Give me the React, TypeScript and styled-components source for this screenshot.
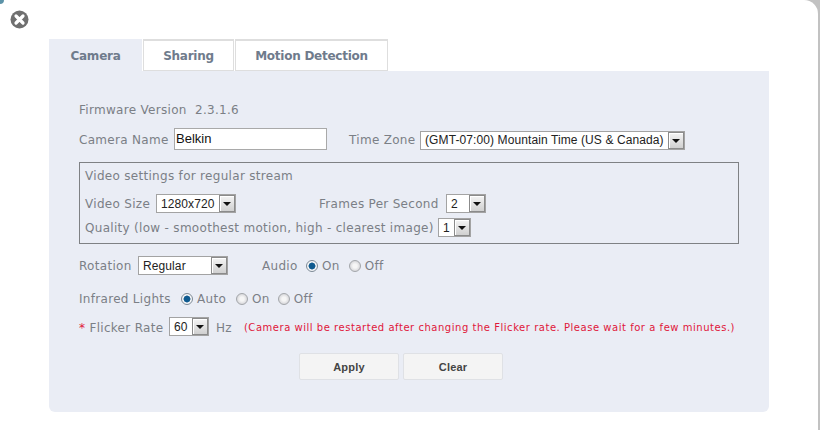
import React from "react";
import styled, { createGlobalStyle } from "styled-components";

const Global = createGlobalStyle`
  html, body { margin: 0; padding: 0; width: 820px; height: 436px; overflow: hidden; background: #fff; }
  * { box-sizing: border-box; }
`;
const Backdrop = styled.div`
  position: relative;
  width: 820px;
  height: 430px;
  background: #c2c2c2;
`;
const Modal = styled.div`
  width: 818px;
  height: 430px;
  background: #fff;
  border-top-right-radius: 14px;
  padding: 39px 0 0 49px;
  font-family: "DejaVu Sans", Verdana, sans-serif;
  font-size: 12px;
  letter-spacing: 0.3px;
  color: #7b7f86;
`;
const Close = styled.svg`
  position: absolute;
  left: 10px;
  top: 10px;
  width: 19px;
  height: 19px;
`;
const Corner = styled.div`
  position: absolute;
  left: 0;
  top: 0;
  width: 4px;
  height: 4px;
  background: #5d93a8;
  border-bottom-right-radius: 4px;
`;
const Tabs = styled.div`
  display: flex;
  height: 32px;
  width: 720px;
`;
const Tab = styled.div<{ $active?: boolean; $w: number }>`
  width: ${(p) => p.$w}px;
  height: 32px;
  margin-right: 1px;
  display: flex;
  align-items: center;
  justify-content: center;
  font-weight: bold;
  font-size: 12px;
  letter-spacing: -0.25px;
  color: #6f7b8c;
  background: ${(p) => (p.$active ? "#eaedf5" : "#fff")};
  border: 1px solid ${(p) => (p.$active ? "#eaedf5" : "#dedede")};
  border-top-width: 2px;
`;
const Panel = styled.div`
  width: 720px;
  height: 341px;
  background: #eaedf5;
  border-radius: 0 0 6px 6px;
  padding: 27px 30px 0 30px;
`;
const Row = styled.div<{ $h: number; $mt?: number }>`
  display: flex;
  align-items: center;
  height: ${(p) => p.$h}px;
  margin-top: ${(p) => p.$mt ?? 0}px;
  white-space: nowrap;
`;
const Label = styled.span<{ $ml?: number; $w?: number; $drop?: boolean }>`
  margin-left: ${(p) => p.$ml ?? 0}px;
  margin-top: ${(p) => (p.$drop ? 2 : 0)}px;
  ${(p) => (p.$w ? `width: ${p.$w}px;` : "")}
  flex: none;
`;
const TextInput = styled.div`
  width: 153px;
  height: 22px;
  background: #fff;
  border: 1px solid #a9a9a9;
  font-family: "Liberation Sans", Arial, sans-serif;
  font-size: 13px;
  letter-spacing: 0;
  color: #111;
  padding-left: 1px;
  line-height: 20px;
`;
const SelectBox = styled.div<{ $w: number; $drop?: boolean }>`
  width: ${(p) => p.$w}px;
  height: 19px;
  flex: none;
  margin-top: ${(p) => (p.$drop ? 2 : 0)}px;
  display: flex;
  align-items: center;
  justify-content: space-between;
  background: #fff;
  border: 1px solid #a3a3a3;
  font-family: "Liberation Sans", Arial, sans-serif;
  font-size: 12px;
  letter-spacing: 0.1px;
  color: #222;
  padding-left: 4px;
`;
const Arrow = styled.span`
  width: 16px;
  height: 17px;
  flex: none;
  position: relative;
  background: linear-gradient(#f4f4f4, #d0d0d0);
  border: 1px solid #8b8b8b;
  box-shadow: inset 1px 1px 0 #fff;
  &::after {
    content: "";
    position: absolute;
    left: 3px;
    top: 6px;
    border-left: 4px solid transparent;
    border-right: 4px solid transparent;
    border-top: 4px solid #111;
  }
`;
const Select: React.FC<{ w: number; drop?: boolean; children: React.ReactNode }> = ({ w, drop, children }) => (
  <SelectBox $w={w} $drop={drop}>
    <span>{children}</span>
    <Arrow />
  </SelectBox>
);
const Fieldset = styled.div`
  width: 660px;
  height: 82px;
  margin-top: 12px;
  border: 1px solid #7f8184;
  padding: 4px 5px 0 5px;
`;
const RadioDot = styled.span<{ $on?: boolean }>`
  width: 12px;
  height: 12px;
  flex: none;
  border-radius: 50%;
  border: 1px solid ${(p) => (p.$on ? "#7d8a96" : "#a3a6aa")};
  background: ${(p) =>
    p.$on
      ? "radial-gradient(circle, #0f5a8f 0 2.6px, #2c6f9e 3.2px, #f4f5f7 3.8px)"
      : "radial-gradient(circle, #f6f6f6 0 2px, #d9d9dc 5px)"};
  margin-right: 4px;
`;
const Radio = styled.span<{ $ml?: number }>`
  display: inline-flex;
  align-items: center;
  margin-left: ${(p) => p.$ml ?? 0}px;
`;
const Star = styled.span`
  color: #e0163a;
`;
const Warning = styled.span`
  margin-left: 12px;
  margin-top: 2px;
  font-size: 10px;
  color: #e0163a;
  letter-spacing: 0.53px;
`;
const Buttons = styled.div`
  display: flex;
  gap: 4px;
  margin-top: 17px;
  margin-left: 220px;
`;
const Button = styled.div`
  width: 100px;
  height: 27px;
  display: flex;
  align-items: center;
  justify-content: center;
  background: #f4f4f4;
  border: 1px solid #dfe1e5;
  border-radius: 2px;
  font-family: "Liberation Sans", Arial, sans-serif;
  font-weight: bold;
  font-size: 11px;
  letter-spacing: 0.2px;
  color: #444;
`;

export default function App() {
  return (
    <>
      <Global />
      <Backdrop>
        <Modal>
          <Corner />
          <Close viewBox="0 0 19 19">
            <circle cx="9.5" cy="9.5" r="9" fill="#6f6f6f" />
            <path d="M6 6 L13 13 M13 6 L6 13" stroke="#fff" strokeWidth="3.2" strokeLinecap="round" />
          </Close>
          <Tabs>
            <Tab $active $w={93}>Camera</Tab>
            <Tab $w={91}>Sharing</Tab>
            <Tab $w={153}>Motion Detection</Tab>
          </Tabs>
          <Panel>
            <Row $h={24}>Firmware Version&nbsp; 2.3.1.6</Row>
            <Row $h={22} $mt={6}>
              <Label $w={95} $drop>Camera Name</Label>
              <TextInput>Belkin</TextInput>
              <Label $ml={22} $w={71} $drop>Time Zone</Label>
              <Select w={265} drop>(GMT-07:00) Mountain Time (US &amp; Canada)</Select>
            </Row>
            <Fieldset>
              <Row $h={17}>Video settings for regular stream</Row>
              <Row $h={19} $mt={10}>
                <Label $w={71}>Video Size</Label>
                <Select w={80}>1280x720</Select>
                <Label $ml={83} $w={127}>Frames Per Second</Label>
                <Select w={40}>2</Select>
              </Row>
              <Row $h={19} $mt={5}>
                <Label $w={353}>Quality (low - smoothest motion, high - clearest image)</Label>
                <Select w={33}>1</Select>
              </Row>
            </Fieldset>
            <Row $h={19} $mt={12}>
              <Label $w={59}>Rotation</Label>
              <Select w={90}>Regular</Select>
              <Label $ml={34} $w={44}>Audio</Label>
              <Radio><RadioDot $on />On</Radio>
              <Radio $ml={9}><RadioDot />Off</Radio>
            </Row>
            <Row $h={19} $mt={14}>
              <Label $w={102}>Infrared Lights</Label>
              <Radio><RadioDot $on />Auto</Radio>
              <Radio $ml={10}><RadioDot />On</Radio>
              <Radio $ml={8}><RadioDot />Off</Radio>
            </Row>
            <Row $h={19} $mt={9}>
              <Label $w={90} $drop><Star>*</Star> Flicker Rate</Label>
              <Select w={40}>60</Select>
              <Label $ml={7} $drop>Hz</Label>
              <Warning>(Camera will be restarted after changing the Flicker rate. Please wait for a few minutes.)</Warning>
            </Row>
            <Buttons>
              <Button>Apply</Button>
              <Button>Clear</Button>
            </Buttons>
          </Panel>
        </Modal>
      </Backdrop>
    </>
  );
}
